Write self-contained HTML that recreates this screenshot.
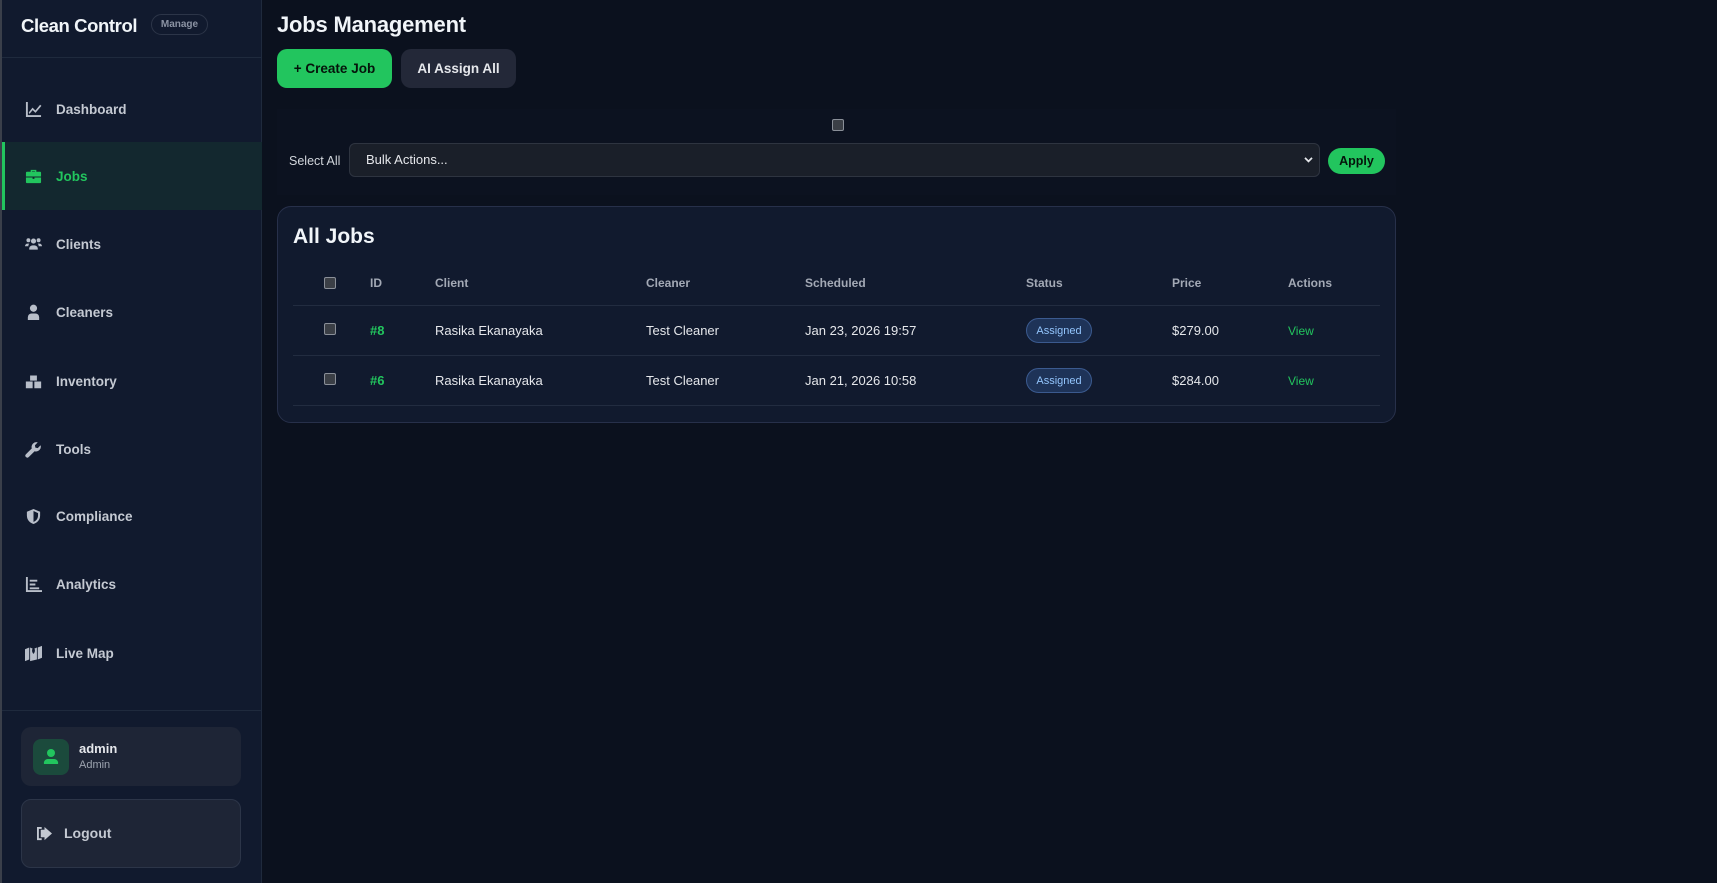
<!DOCTYPE html>
<html><head><meta charset="utf-8"><style>
*{box-sizing:border-box;margin:0;padding:0}
body{width:1717px;height:883px;background:#0b111e;font-family:"Liberation Sans",sans-serif;color:#e5e7eb;position:relative;overflow:hidden}
.sb{position:absolute;left:0;top:0;width:262px;height:883px;background:#111a2e;border-right:1px solid #1f2a3d;border-left:2px solid #3a3f4a}
.logo{position:absolute;left:19px;top:15px;font-size:18.5px;font-weight:900;color:#f1f5f9;letter-spacing:-0.4px}
.pill{position:absolute;left:149px;top:14px;width:57px;height:21px;border:1px solid #2c3548;border-radius:11px;font-size:10px;font-weight:bold;color:#8b93a3;text-align:center;line-height:19px}
.sep{position:absolute;left:0;right:0;height:1px;background:#1f2a3d}
.nav{position:absolute;left:0;width:260px;height:68px;display:flex;align-items:center;font-size:13.5px;font-weight:bold;color:#c4c9d2}
.nav svg{position:absolute;left:23px;width:17px;height:17px;fill:#b8bec9}
.nav span{position:absolute;left:54px}
.nav.act{background:#13282f;color:#22c55e;border-left:3px solid #22c55e}
.nav.act svg{fill:#22c55e;left:20px}.nav.act span{left:51px}
.card1{position:absolute;left:19px;top:727px;width:220px;height:59px;background:#1e2536;border-radius:10px}
.av{position:absolute;left:12px;top:12px;width:36px;height:36px;border-radius:8px;background:#1b4a3c}
.card2{position:absolute;left:19px;top:799px;width:220px;height:69px;background:#1e2536;border:1px solid #2c3548;border-radius:10px}
h1{position:absolute;left:277px;top:12px;font-size:22px;font-weight:bold;color:#f1f5f9;letter-spacing:-0.2px}
.btn{position:absolute;top:49px;height:39px;border-radius:10px;font-size:13.5px;font-weight:bold;line-height:39px;text-align:center}
.bulk{position:absolute;left:277px;top:109px;width:1119px;height:86px;background:#0c1220}
.cb{position:absolute;width:12px;height:12px;border:1px solid #8a8f98;background:#3b3f46;border-radius:2px}
.sel{position:absolute;left:349px;top:143px;width:971px;height:34px;background:#1a1f29;border:1px solid #2e3440;border-radius:6px;font-size:13px;color:#e5e7eb;line-height:32px;padding-left:16px}
.card{position:absolute;left:277px;top:206px;width:1119px;height:217px;background:#111a2e;border:1px solid #27304a;border-radius:14px}
.th{position:absolute;top:276px;font-size:12px;font-weight:bold;color:#a3a9b5}
.td{position:absolute;font-size:13px;color:#e5e7eb}
.line{position:absolute;left:293px;width:1087px;height:1px;background:#222c40}
.badge{position:absolute;left:1026px;width:66px;height:25px;border-radius:13px;background:#1e3358;border:1px solid #3b5a8f;color:#93c5fd;font-size:11px;text-align:center;line-height:24px}
</style></head><body>
<div class="sb">
<div class="logo">Clean Control</div><div class="pill">Manage</div>
<div class="sep" style="top:57px"></div>
<div class="nav" style="top:75px"><svg viewBox="0 0 18 18"><path d="M1 1h2v14h14v2H1z M4 12l4-5 3 3 5-6 1.4 1.2-6.3 7.4-3-3-3.4 4.2z"/></svg><span>Dashboard</span></div>
<div class="nav act" style="top:142px"><svg viewBox="0 0 18 18"><path d="M6 2h6v2h4a1 1 0 011 1v4H1V5a1 1 0 011-1h4zm1.5 1.5V4h3v-.5zM1 10h7v1.5h2V10h7v5a1 1 0 01-1 1H2a1 1 0 01-1-1z"/></svg><span>Jobs</span></div>
<div class="nav" style="top:210px"><svg viewBox="0 0 20 18"><circle cx="4" cy="4" r="2.3"/><circle cx="16" cy="4" r="2.3"/><circle cx="10" cy="5" r="3"/><path d="M0 11a3 3 0 013-3h2a4 4 0 00-1 3H0zM20 11a3 3 0 00-3-3h-2a4 4 0 011 3zM5 15a4 4 0 014-5h2a4 4 0 014 5z"/></svg><span>Clients</span></div>
<div class="nav" style="top:278px"><svg viewBox="0 0 18 18"><circle cx="9" cy="4.5" r="3.8"/><path d="M3 17v-3a4 4 0 014-4h4a4 4 0 014 4v3z"/></svg><span>Cleaners</span></div>
<div class="nav" style="top:347px"><svg viewBox="0 0 20 18"><path d="M6 2h8v6H6zM1 9h8v8H1zM11 9h8v8h-8z"/></svg><span>Inventory</span></div>
<div class="nav" style="top:415px"><svg viewBox="0 0 18 18"><path d="M16.5 4.5l-3 3-2.5-.5-.5-2.5 3-3a5 5 0 00-6.3 6.3L1 14a2 2 0 003 3l6.2-6.2a5 5 0 006.3-6.3z"/></svg><span>Tools</span></div>
<div class="nav" style="top:482px"><svg viewBox="0 0 18 18"><path d="M9 1l7 3v4c0 5-3.5 8-7 9-3.5-1-7-4-7-9V4zm0 2.2V14.8c2.5-1 4.8-3.3 4.8-6.8V5.4z"/></svg><span>Compliance</span></div>
<div class="nav" style="top:550px"><svg viewBox="0 0 18 18"><path d="M1 1h2v14h15v2H1zM5 4h8v2H5zM5 8h6v2H5zM5 12h10v2H5z"/></svg><span>Analytics</span></div>
<div class="nav" style="top:619px"><svg viewBox="0 0 20 18"><path d="M0 4l5-2v14l-5 2zM15 2l5-2v14l-5 2zM6 2l3 1.2C8 5 8 7 10 9.5 12 7 12 5 11 3.2L14 2v14l-8 2z"/><circle cx="10" cy="4.5" r="1.3" fill="#111a2e"/></svg><span>Live Map</span></div>
<div class="sep" style="top:710px"></div>
<div class="card1"><div class="av"><svg viewBox="0 0 36 36" width="36" height="36"><circle cx="18" cy="14" r="4" fill="#22c55e"/><path d="M11 25a4 4 0 014-5h6a4 4 0 014 5z" fill="#22c55e"/></svg></div>
<div style="position:absolute;left:58px;top:14px;font-size:13px;font-weight:bold;color:#e5e7eb">admin</div>
<div style="position:absolute;left:58px;top:32px;font-size:11px;color:#9ca3af">Admin</div></div>
<div class="card2"><svg viewBox="0 0 18 16" width="17" height="15" style="position:absolute;left:14px;top:26px;fill:#c4c9d2"><path d="M1 1h5v2H3v10h3v2H1zM9 4V1l8 7-8 7v-3H5V4z"/></svg>
<div style="position:absolute;left:42px;top:25px;font-size:14px;font-weight:bold;color:#c4c9d2">Logout</div></div>
</div>
<h1>Jobs Management</h1>
<div class="btn" style="left:277px;width:115px;background:#22c55e;color:#05140b">+ Create Job</div>
<div class="btn" style="left:401px;width:115px;background:#232838;color:#e5e7eb">AI Assign All</div>
<div class="bulk"></div>
<div class="cb" style="left:832px;top:119px"></div>
<div style="position:absolute;left:289px;top:154px;font-size:12.5px;color:#d1d5db">Select All</div>
<div class="sel">Bulk Actions...<svg viewBox="0 0 10 8" width="9" height="7" style="position:absolute;right:6px;top:13px"><path d="M1 1l4 4 4-4" stroke="#e5e7eb" stroke-width="2" fill="none"/></svg></div>
<div style="position:absolute;left:1328px;top:148px;width:57px;height:26px;background:#22c55e;border-radius:13px;color:#05140b;font-size:12.5px;font-weight:bold;text-align:center;line-height:26px">Apply</div>
<div class="card"></div>
<div style="position:absolute;left:293px;top:225px;font-size:21px;font-weight:bold;color:#f1f5f9">All Jobs</div>
<div class="cb" style="left:324px;top:277px"></div>
<div class="th" style="left:370px">ID</div><div class="th" style="left:435px">Client</div><div class="th" style="left:646px">Cleaner</div><div class="th" style="left:805px">Scheduled</div><div class="th" style="left:1026px">Status</div><div class="th" style="left:1172px">Price</div><div class="th" style="left:1288px">Actions</div>
<div class="line" style="top:305px"></div>
<div class="cb" style="left:324px;top:323px"></div>
<div class="td" style="left:370px;top:323px;color:#22c55e;font-weight:bold">#8</div>
<div class="td" style="left:435px;top:323px">Rasika Ekanayaka</div><div class="td" style="left:646px;top:323px">Test Cleaner</div><div class="td" style="left:805px;top:323px">Jan 23, 2026 19:57</div>
<div class="badge" style="top:318px">Assigned</div>
<div class="td" style="left:1172px;top:323px">$279.00</div><div class="td" style="left:1288px;top:324px;color:#22c55e;font-size:12px">View</div>
<div class="line" style="top:355px"></div>
<div class="cb" style="left:324px;top:373px"></div>
<div class="td" style="left:370px;top:373px;color:#22c55e;font-weight:bold">#6</div>
<div class="td" style="left:435px;top:373px">Rasika Ekanayaka</div><div class="td" style="left:646px;top:373px">Test Cleaner</div><div class="td" style="left:805px;top:373px">Jan 21, 2026 10:58</div>
<div class="badge" style="top:368px">Assigned</div>
<div class="td" style="left:1172px;top:373px">$284.00</div><div class="td" style="left:1288px;top:374px;color:#22c55e;font-size:12px">View</div>
<div class="line" style="top:405px"></div>
</body></html>
